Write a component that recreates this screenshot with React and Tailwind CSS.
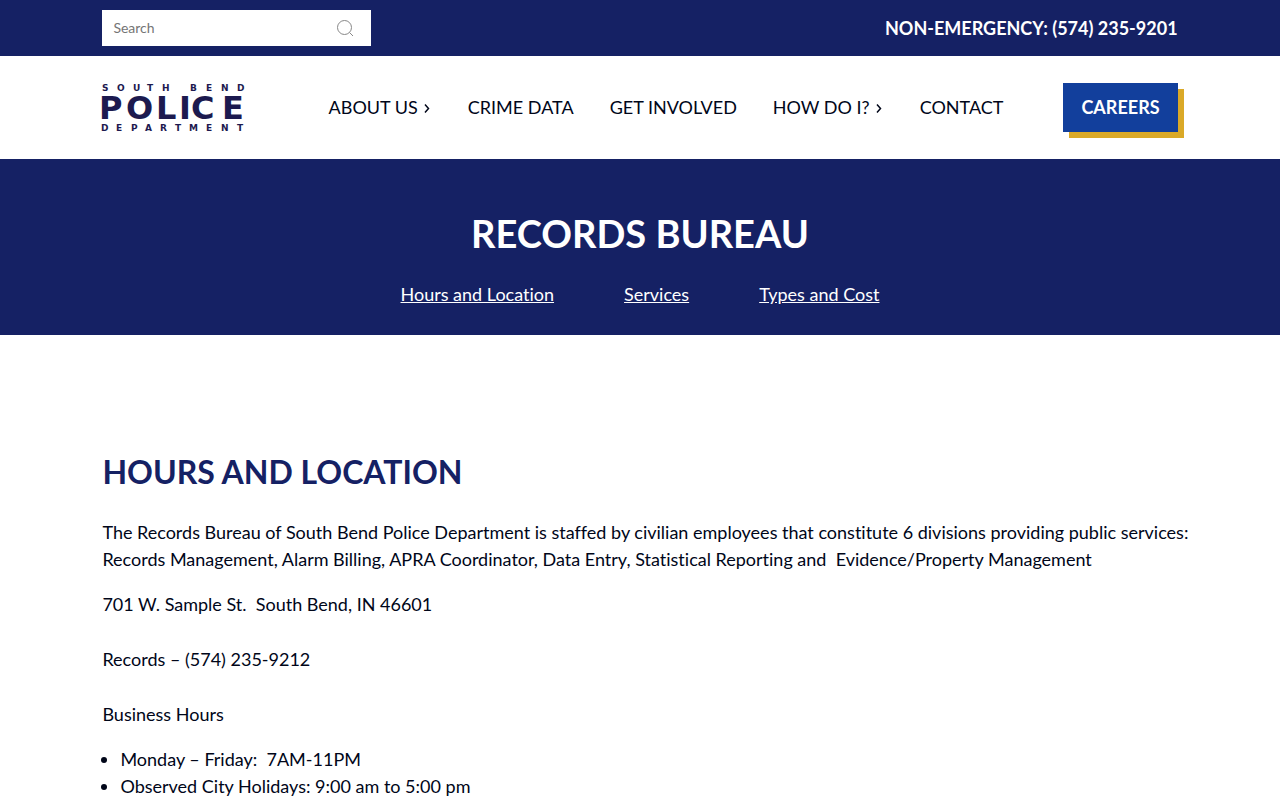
import React from 'react';

const navLinks = [
  { label: 'About Us', hasMenu: true },
  { label: 'Crime Data' },
  { label: 'Get Involved' },
  { label: 'How Do I?', hasMenu: true },
  { label: 'Contact' },
];

const pageLinks = [
  { label: 'Hours and Location', href: '#hours' },
  { label: 'Services', href: '#services' },
  { label: 'Types and Cost', href: '#types' },
];

const Logo = () => (
  <svg
    className="w-36 h-12 overflow-visible"
    viewBox="0 0 144 48"
    fill="#1c1a4f"
    fontFamily="'DejaVu Sans', sans-serif"
    fontWeight="700"
    role="img"
    aria-label="South Bend Police Department"
  >
    <text x="0 15 31 45 60 75 88 104 119 135" y="7" fontSize="9">SOUTH BEND</text>
    <text x="-3 24 54 77 89 120" y="35" fontSize="32">POLICE</text>
    <text x="-1 14 29 43 58 73 87 104 119 135" y="47" fontSize="9">DEPARTMENT</text>
  </svg>
);

const Chevron = () => (
  <svg className="w-2 h-3" viewBox="0 0 8 12" fill="none" stroke="currentColor" strokeWidth="1.5">
    <path d="M1 2.5 L4.5 6.5 L1 10.5" />
  </svg>
);

const TopBar = () => (
  <div className="bg-[#152164]">
    <div className="w-[84%] mx-auto h-14 flex items-center justify-between">
      <form className="flex items-center bg-white w-[269px] h-9 pl-[11px] pr-[17px]" onSubmit={(e) => e.preventDefault()}>
        <input
          type="text"
          aria-label="Search"
          placeholder="Search"
          className="flex-1 min-w-0 text-sm text-gray-700 placeholder:text-[#757575] outline-none"
        />
        <button type="submit" aria-label="Submit search">
          <svg className="size-[18px]" viewBox="0 0 18 18" fill="none" stroke="#888" strokeWidth="1">
            <circle cx="8.5" cy="8.5" r="7" />
            <path d="M13.5 13.5 L17 17" />
          </svg>
        </button>
      </form>
      <a href="tel:5742359201" className="text-white font-bold text-lg leading-[27px] uppercase">Non-Emergency: (574) 235-9201</a>
    </div>
  </div>
);

const Header = () => (
  <header className="bg-white">
    <div className="w-[84%] mx-auto h-[103px] flex items-center justify-between">
      <a href="#home"><Logo /></a>
      <div className="flex items-center gap-[60px]">
        <nav className="flex items-center gap-9">
          {navLinks.map((link) => (
            <a key={link.label} href="#menu" className="flex items-center gap-1.5 text-lg leading-[27px] uppercase">
              {link.label}
              {link.hasMenu && <Chevron />}
            </a>
          ))}
        </nav>
        <a href="#careers" className="bg-[#123f9c] text-white font-bold text-lg leading-[27px] uppercase px-[18px] py-[11px] shadow-[6px_6px_0_#daa928]">
          Careers
        </a>
      </div>
    </div>
  </header>
);

const Hero = () => (
  <section className="bg-[#152164] text-white text-center pt-[50px] pb-[27px]">
    <h1 className="text-[38px] leading-[48px] font-bold uppercase">Records Bureau</h1>
    <div className="flex justify-center gap-[70px] mt-6">
      {pageLinks.map((link) => (
        <a key={link.href} href={link.href} className="text-lg leading-[27px] underline">{link.label}</a>
      ))}
    </div>
  </section>
);

const App = () => {
  return (
    <div className="font-['Lato',sans-serif] [font-variant-ligatures:none] text-[#000619] bg-white">
      <TopBar />
      <Header />
      <Hero />
      <main id="hours" className="w-[84%] mx-auto pt-[117px] text-lg leading-[27px]">
        <h2 className="text-[32px] leading-10 font-bold uppercase text-[#152164] mb-[27px]">Hours and Location</h2>
        <p className="mb-[18px] -mr-6">
          The Records Bureau of South Bend Police Department is staffed by civilian employees that constitute 6 divisions
          providing public services:<br />
          Records Management, Alarm Billing, APRA Coordinator, Data Entry, Statistical
          Reporting and&nbsp; Evidence/Property Management
        </p>
        <p className="mb-7">701 W. Sample St.&nbsp; South Bend, IN 46601</p>
        <p className="mb-7">Records – (574) 235-9212</p>
        <p className="mb-[18px]">Business Hours</p>
        <ul className="list-disc pl-[18px]">
          <li>Monday – Friday:&nbsp; 7AM-11PM</li>
          <li>Observed City Holidays: 9:00 am to 5:00 pm</li>
        </ul>
      </main>
    </div>
  );
};

export default App;
